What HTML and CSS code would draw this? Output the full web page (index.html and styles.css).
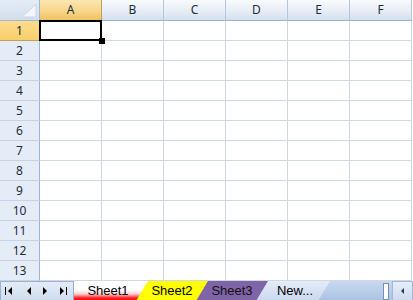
FILE: index.html
```html
<!DOCTYPE html>
<html lang="en">
<head>
  <meta charset="UTF-8" />
  <meta name="viewport" content="width=device-width, initial-scale=1.0" />
  <title>Workbook</title>
  <link rel="stylesheet" href="styles.css">
</head>
<body>
  <div class="book">
    <table class="grid">
      <thead>
        <tr>
          <th class="corner">
            <svg width="40" height="20" viewBox="0 0 40 20">
              <polygon points="36,4 36,17 22,17" fill="#f3f6fb" stroke="#c9d6e8" stroke-width="1" />
            </svg>
          </th>
          <th class="col sel">A</th>
          <th class="col">B</th>
          <th class="col">C</th>
          <th class="col">D</th>
          <th class="col">E</th>
          <th class="col">F</th>
        </tr>
      </thead>
      <tbody id="rows"></tbody>
    </table>

    <div class="tabbar">
      <div class="nav">
        <svg width="72" height="18" viewBox="0 0 72 18">
          <rect x="4" y="5" width="1" height="8" fill="#000" />
          <polygon points="11,5 11,13 7,9" fill="#000" />
          <polygon points="30,5 30,13 26,9" fill="#000" />
          <polygon points="42,5 42,13 46,9" fill="#000" />
          <polygon points="59,5 59,13 63,9" fill="#000" />
          <rect x="65" y="5" width="1" height="8" fill="#000" />
        </svg>
      </div>
      <div class="tabs">
        <div class="tab first">Sheet1</div>
        <div class="tab yellow">Sheet2</div>
        <div class="tab purple">Sheet3</div>
        <div class="tab add">New...</div>
      </div>
      <div class="fill"></div>
      <div class="thumb"></div>
      <div class="scrollbtn">
        <svg width="8" height="8" viewBox="0 0 8 8">
          <polygon points="5,1 5,7 2,4" fill="#2b3a4e" />
        </svg>
      </div>
    </div>
  </div>

  <script>
    const cols = ["A", "B", "C", "D", "E", "F"];
    const tbody = document.getElementById("rows");
    for (let r = 1; r <= 13; r++) {
      const cells = cols.map((c, i) =>
        `<td class="cell">${r === 1 && i === 0 ? "<div class='cursor'><span class='handle'></span></div>" : ""}</td>`
      ).join("");
      tbody.innerHTML += `<tr><th class="row${r === 1 ? " sel" : ""}">${r}</th>${cells}</tr>`;
    }
  </script>
</body>
</html>
```

FILE: styles.css
```css
body {
  margin: 0;
  overflow: hidden;
  font-family: 'Noto Sans', 'Open Sans', sans-serif;
  background: #fff;
}
.book {
  width: 413px;
  height: 300px;
  display: flex;
  flex-direction: column;
  overflow: hidden;
}
.grid {
  table-layout: fixed;
  border-collapse: separate;
  border-spacing: 0;
  width: 412px;
}
.grid th, .grid td {
  box-sizing: border-box;
  height: 20px;
  padding: 0;
  font-weight: normal;
  font-size: 12px;
  color: #1f2b3a;
  text-align: center;
  line-height: 18px;
}
.corner {
  width: 40px;
  background: linear-gradient(#e4ecf7, #d3ddeb);
  border-right: 1px solid #9eb6ce;
  border-bottom: 1px solid #9eb6ce;
}
.corner svg {
  display: block;
}
.col {
  width: 62px;
  background: linear-gradient(#f9fbfd, #e6edf6 55%, #d5dfed);
  border-right: 1px solid #b4c6dc;
  border-bottom: 1px solid #9eb6ce;
}
.col.sel {
  background: linear-gradient(#fbe6b4, #f8d68a 55%, #f1c15f);
  border-right-color: #c2a05a;
  border-bottom-color: #c2a05a;
}
.row {
  background: #e4ecf7;
  border-right: 1px solid #9eb6ce;
  border-bottom: 1px solid #c5d3e3;
}
.row.sel {
  background: linear-gradient(#fcdc8e, #f8cf6a);
  border-bottom-color: #c2a05a;
}
.cell {
  position: relative;
  border-right: 1px solid #d0d7e5;
  border-bottom: 1px solid #d0d7e5;
}
.cursor {
  position: absolute;
  z-index: 2;
  left: -1px;
  top: -1px;
  right: -1px;
  bottom: -1px;
  border: 2px solid #000;
}
.handle {
  position: absolute;
  right: -5px;
  bottom: -5px;
  width: 6px;
  height: 6px;
  background: #000;
}
.tabbar {
  height: 20px;
  display: flex;
  background: linear-gradient(#c9d9ee, #a9c2e3);
  font-family: 'Liberation Sans', Arial, sans-serif;
  font-size: 13px;
}
.nav {
  box-sizing: border-box;
  width: 74px;
  height: 20px;
  background: linear-gradient(#e3ebf6, #d0ddef);
  border: 1px solid #9ab1cf;
}
.nav svg {
  display: block;
}
.tabs {
  display: flex;
}
.tab {
  height: 20px;
  width: 74px;
  line-height: 20px;
  text-align: center;
  color: #000;
  clip-path: polygon(12px 0, 100% 0, calc(100% - 12px) 100%, 0 100%);
  margin-left: -14px;
  padding-right: 2px;
  box-sizing: border-box;
}
.tab.first {
  width: 76px;
  margin-left: 0;
  padding-right: 8px;
  clip-path: polygon(0 0, 100% 0, calc(100% - 12px) 100%, 0 100%);
  background: linear-gradient(#ffffff, #ffffff 45%, #ffd0d0 65%, #ff2020 85%, #e80000);
}
.tab.yellow {
  background: #ffff00;
}
.tab.purple {
  background: #8064a8;
  color: #111;
}
.tab.add {
  padding-left: 6px;
  background: linear-gradient(#e4ecf8, #cad9ee);
}
.fill {
  flex: 1;
}
.thumb {
  box-sizing: border-box;
  width: 6px;
  height: 17px;
  margin: 2px 3px 0 0;
  background: #fff;
  border: 1px solid #6f8fbf;
}
.scrollbtn {
  box-sizing: border-box;
  width: 21px;
  height: 20px;
  display: flex;
  align-items: center;
  justify-content: center;
  background: linear-gradient(#e6eef8, #cfdcee);
  border: 1px solid #a3b9d6;
}
.scrollbtn svg {
  display: block;
}
```
